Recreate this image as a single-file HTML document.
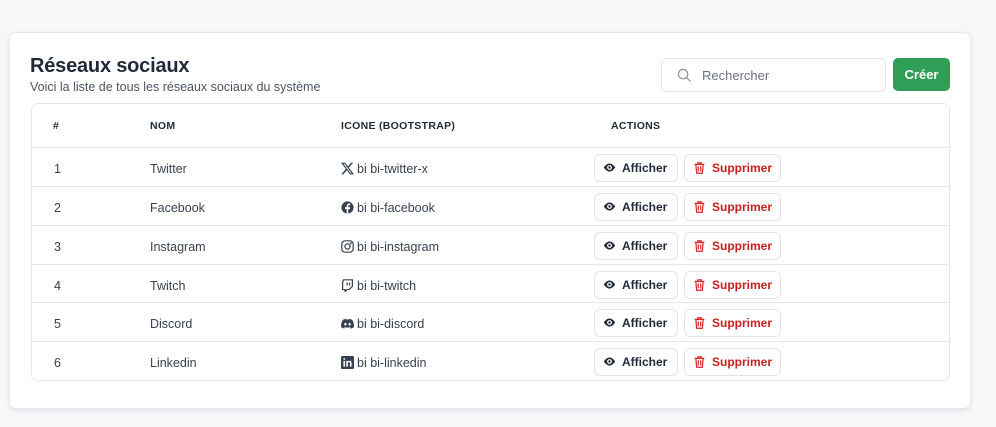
<!DOCTYPE html>
<html><head><meta charset="utf-8"><style>
*{box-sizing:border-box;margin:0;padding:0}
body{width:996px;height:427px;background:#f6f7f9;font-family:"Liberation Sans",sans-serif;color:#1f2937;position:relative;overflow:hidden}
.card{position:absolute;left:9px;top:32px;width:962px;height:377px;background:#fff;border:1px solid #e5e7eb;border-radius:7px;box-shadow:0 2px 4px rgba(0,0,0,.08)}
h1{position:absolute;left:30px;top:55px;font-size:20px;font-weight:bold;color:#1f2937;letter-spacing:-.2px}
.sub{position:absolute;left:30px;top:80px;font-size:12.5px;color:#4b5563}
.search{position:absolute;left:661px;top:58px;width:225px;height:34px;border:1px solid #e2e4e8;border-radius:6px;background:#fff}
.search span{position:absolute;left:40px;top:9px;font-size:13px;color:#6b7280}
.search svg{position:absolute;left:15px;top:9px}
.btn{position:absolute;left:893px;top:58px;width:57px;height:33px;background:#2f9e57;border-radius:5px;color:#fff;font-size:13px;font-weight:bold;text-align:center;line-height:33px}
.tbl{position:absolute;left:31px;top:103px;width:919px;height:278px;border:1px solid #e5e7eb;border-radius:7px;overflow:hidden}
.hd{position:absolute;top:0;height:43px;line-height:45px;font-size:10.5px;font-weight:bold;color:#1f2937;letter-spacing:.3px}
.row{position:absolute;left:0;width:100%;height:39px;border-top:1px solid #e5e7eb;font-size:12.5px;color:#374151}
.row .c{position:absolute;top:2px;line-height:39px}
.ic{display:inline-block;vertical-align:-2px;margin-right:3px}
.b{position:absolute;top:6px;height:28px;border:1px solid #e2e4e8;border-radius:6px;font-size:12px;font-weight:bold;line-height:26px}
.b1{left:562px;width:84px;color:#1f2937;padding-left:27px}
.b2{left:652px;width:97px;color:#c81e1e;padding-left:27px}
.b svg{position:absolute;left:8px;top:6px}
</style></head><body>
<div class="card"></div>
<h1>Réseaux sociaux</h1>
<div class="sub">Voici la liste de tous les réseaux sociaux du système</div>
<div class="search"><svg width="15" height="15" viewBox="0 0 16 16" fill="none" stroke="#8b929c" stroke-width="1.3"><circle cx="6.5" cy="6.5" r="5"/><path d="M10.2 10.2L14.5 14.5"/></svg><span>Rechercher</span></div>
<div class="btn">Créer</div>
<div class="tbl">
<div class="hd" style="left:21px">#</div>
<div class="hd" style="left:118px">NOM</div>
<div class="hd" style="left:309px">ICONE (BOOTSTRAP)</div>
<div class="hd" style="left:579px">ACTIONS</div>

<div class="row" style="top:43px"><div class="c" style="left:22px">1</div><div class="c" style="left:118px">Twitter</div><div class="c" style="left:309px"><svg class="ic" width="13" height="13" viewBox="0 0 16 16"><path fill="#374151" d="M12.6.75h2.454l-5.36 6.142L16 15.25h-4.937l-3.867-5.07-4.425 5.07H.316l5.733-6.57L0 .75h5.063l3.495 4.633L12.601.75Zm-.86 13.028h1.36L4.323 2.145H2.865z"/></svg>bi bi-twitter-x</div>
<div class="b b1"><svg width="13" height="13" viewBox="0 0 16 16"><path fill="#1f2937" d="M8 3C4 3 1 8 1 8s3 5 7 5 7-5 7-5-3-5-7-5zm0 8a3 3 0 110-6 3 3 0 010 6zm0-4.5a1.5 1.5 0 100 3 1.5 1.5 0 000-3z"/></svg>Afficher</div>
<div class="b b2"><svg width="13" height="14" viewBox="0 0 16 16" fill="none" stroke="#dc2626" stroke-width="1.5"><path d="M2 3.5h12M6 3.5V1.5h4v2M3.5 3.5l1 11h7l1-11M6.5 6v6M9.5 6v6"/></svg>Supprimer</div></div>

<div class="row" style="top:82px"><div class="c" style="left:22px">2</div><div class="c" style="left:118px">Facebook</div><div class="c" style="left:309px"><svg class="ic" width="13" height="13" viewBox="0 0 16 16"><circle cx="8" cy="8" r="7.5" fill="#374151"/><path fill="#fff" d="M9 16V10h2l.3-2.3H9V6.3c0-.7.2-1.1 1.1-1.1h1.2V3.1C11 3 10.4 3 9.8 3 8.1 3 7 4 7 5.9v1.8H5V10h2v6z"/></svg>bi bi-facebook</div>
<div class="b b1"><svg width="13" height="13" viewBox="0 0 16 16"><path fill="#1f2937" d="M8 3C4 3 1 8 1 8s3 5 7 5 7-5 7-5-3-5-7-5zm0 8a3 3 0 110-6 3 3 0 010 6zm0-4.5a1.5 1.5 0 100 3 1.5 1.5 0 000-3z"/></svg>Afficher</div>
<div class="b b2"><svg width="13" height="14" viewBox="0 0 16 16" fill="none" stroke="#dc2626" stroke-width="1.5"><path d="M2 3.5h12M6 3.5V1.5h4v2M3.5 3.5l1 11h7l1-11M6.5 6v6M9.5 6v6"/></svg>Supprimer</div></div>

<div class="row" style="top:121px"><div class="c" style="left:22px">3</div><div class="c" style="left:118px">Instagram</div><div class="c" style="left:309px"><svg class="ic" width="13" height="13" viewBox="0 0 16 16" fill="none" stroke="#374151" stroke-width="1.5"><rect x="1" y="1" width="14" height="14" rx="4"/><circle cx="8" cy="8" r="3.2"/><circle cx="12" cy="4" r=".5" fill="#374151"/></svg>bi bi-instagram</div>
<div class="b b1"><svg width="13" height="13" viewBox="0 0 16 16"><path fill="#1f2937" d="M8 3C4 3 1 8 1 8s3 5 7 5 7-5 7-5-3-5-7-5zm0 8a3 3 0 110-6 3 3 0 010 6zm0-4.5a1.5 1.5 0 100 3 1.5 1.5 0 000-3z"/></svg>Afficher</div>
<div class="b b2"><svg width="13" height="14" viewBox="0 0 16 16" fill="none" stroke="#dc2626" stroke-width="1.5"><path d="M2 3.5h12M6 3.5V1.5h4v2M3.5 3.5l1 11h7l1-11M6.5 6v6M9.5 6v6"/></svg>Supprimer</div></div>

<div class="row" style="top:160px"><div class="c" style="left:22px">4</div><div class="c" style="left:118px">Twitch</div><div class="c" style="left:309px"><svg class="ic" width="13" height="13" viewBox="0 0 16 16" fill="none" stroke="#374151" stroke-width="1.5"><path d="M3 1h11v8l-4 4H7.5L5 15.5V13H2V4z"/><path d="M7.5 4.5v3.5M10.5 4.5v3.5"/></svg>bi bi-twitch</div>
<div class="b b1"><svg width="13" height="13" viewBox="0 0 16 16"><path fill="#1f2937" d="M8 3C4 3 1 8 1 8s3 5 7 5 7-5 7-5-3-5-7-5zm0 8a3 3 0 110-6 3 3 0 010 6zm0-4.5a1.5 1.5 0 100 3 1.5 1.5 0 000-3z"/></svg>Afficher</div>
<div class="b b2"><svg width="13" height="14" viewBox="0 0 16 16" fill="none" stroke="#dc2626" stroke-width="1.5"><path d="M2 3.5h12M6 3.5V1.5h4v2M3.5 3.5l1 11h7l1-11M6.5 6v6M9.5 6v6"/></svg>Supprimer</div></div>

<div class="row" style="top:198px"><div class="c" style="left:22px">5</div><div class="c" style="left:118px">Discord</div><div class="c" style="left:309px"><svg class="ic" width="13" height="13" viewBox="0 0 16 16"><path fill="#374151" d="M13.5 3.3A13 13 0 0010.3 2.3l-.4.8a12 12 0 00-3.8 0l-.4-.8a13 13 0 00-3.2 1C.4 6.4-.1 9.4.1 12.300a13 13 0 004 2l.8-1.3a8 8 0 01-1.3-.6l.3-.3a9.5 9.5 0 008.2 0l.3.3-1.3.6.8 1.3a13 13 0 004-2c.3-3.4-.5-6.4-2.4-9zM5.4 10.5c-.8 0-1.4-.7-1.4-1.6s.6-1.6 1.4-1.6 1.4.7 1.4 1.6-.6 1.6-1.4 1.6zm5.2 0c-.8 0-1.4-.7-1.4-1.6s.6-1.6 1.4-1.6 1.4.7 1.4 1.6-.6 1.6-1.4 1.6z"/></svg>bi bi-discord</div>
<div class="b b1"><svg width="13" height="13" viewBox="0 0 16 16"><path fill="#1f2937" d="M8 3C4 3 1 8 1 8s3 5 7 5 7-5 7-5-3-5-7-5zm0 8a3 3 0 110-6 3 3 0 010 6zm0-4.5a1.5 1.5 0 100 3 1.5 1.5 0 000-3z"/></svg>Afficher</div>
<div class="b b2"><svg width="13" height="14" viewBox="0 0 16 16" fill="none" stroke="#dc2626" stroke-width="1.5"><path d="M2 3.5h12M6 3.5V1.5h4v2M3.5 3.5l1 11h7l1-11M6.5 6v6M9.5 6v6"/></svg>Supprimer</div></div>

<div class="row" style="top:237px"><div class="c" style="left:22px">6</div><div class="c" style="left:118px">Linkedin</div><div class="c" style="left:309px"><svg class="ic" width="13" height="13" viewBox="0 0 16 16"><rect width="16" height="16" rx="1.5" fill="#374151"/><path fill="#fff" d="M3 6h2v7H3zM4 2.5a1.1 1.1 0 110 2.2 1.1 1.1 0 010-2.2zM6.5 6h2v1c.3-.6 1-1.2 2.1-1.2 2 0 2.4 1.3 2.4 3V13h-2V9.3c0-.8 0-1.8-1.1-1.8S8.5 8.3 8.5 9.2V13h-2z"/></svg>bi bi-linkedin</div>
<div class="b b1"><svg width="13" height="13" viewBox="0 0 16 16"><path fill="#1f2937" d="M8 3C4 3 1 8 1 8s3 5 7 5 7-5 7-5-3-5-7-5zm0 8a3 3 0 110-6 3 3 0 010 6zm0-4.5a1.5 1.5 0 100 3 1.5 1.5 0 000-3z"/></svg>Afficher</div>
<div class="b b2"><svg width="13" height="14" viewBox="0 0 16 16" fill="none" stroke="#dc2626" stroke-width="1.5"><path d="M2 3.5h12M6 3.5V1.5h4v2M3.5 3.5l1 11h7l1-11M6.5 6v6M9.5 6v6"/></svg>Supprimer</div></div>
</div>
</body></html>
